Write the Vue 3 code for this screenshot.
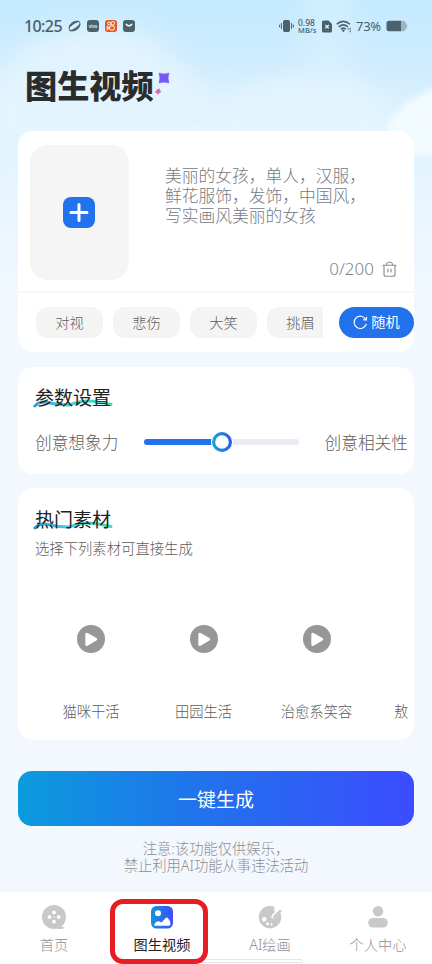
<script setup>
import { ref } from 'vue'

const moods = ['对视', '悲伤', '大笑', '挑眉']
const materials = ['猫咪干活', '田园生活', '治愈系笑容', '敖']
const strength = ref(50)
</script>

<template>
  <div class="page">
    <svg class="sky" viewBox="0 0 432 320" preserveAspectRatio="none" aria-hidden="true">
      <defs>
        <linearGradient id="skyFade" x1="0" y1="0" x2="0" y2="1">
          <stop offset="0" stop-color="#c5eafe" />
          <stop offset=".2" stop-color="#cfecfe" />
          <stop offset=".4" stop-color="#dff3fe" />
          <stop offset=".7" stop-color="#ebf6ff" />
          <stop offset="1" stop-color="#f3f8ff" />
        </linearGradient>
        <filter id="haze" x="-40%" y="-40%" width="180%" height="180%"><feGaussianBlur stdDeviation="12" /></filter>
        <filter id="edge" x="-20%" y="-20%" width="140%" height="140%"><feGaussianBlur stdDeviation="3" /></filter>
      </defs>
      <rect width="432" height="320" fill="url(#skyFade)" />
      <path d="M20 50Q90 10 150 36Q185 65 215 98Q280 70 340 70Q400 95 392 150H-10V80Z" fill="#e5f5fe" opacity=".85" filter="url(#haze)" />
      <ellipse cx="328" cy="25" rx="26" ry="60" fill="#dcf3ff" opacity=".5" filter="url(#haze)" />
      <path d="M387 134Q389 114 401 112Q404 98 418 98Q424 88 445 86V155H392Z" fill="#f5fcff" opacity=".9" filter="url(#edge)" />
    </svg>

    <header class="status">
      <div class="status-left">
        <span class="clock">10:25</span>
        <svg width="13" height="14" viewBox="0 0 13 14"><path d="M1.1 8.7C1.7 4 6 1.6 11 2.3C5.8 4 3.3 6.4 1.1 8.7ZM12 5C11.7 9.7 7.3 12.6 1.8 11.8C7.2 10.2 9.8 7.6 12 5ZM1 8.5L1.8 11.8M11 2.2L12.2 5.2" fill="#49606a" stroke="#49606a" stroke-width=".9" /></svg>
        <span class="app-badge dark"><b>vivo</b></span>
        <span class="app-badge orange">
          <svg width="12" height="12" viewBox="0 0 12 12" fill="none" stroke="#fff" stroke-width="1"><circle cx="4.2" cy="3.5" r="1.5" /><circle cx="7.8" cy="3.3" r="1.8" /><rect x="4.7" y="6" width="4.6" height="4" rx="1.2" /><path d="M2.2 6.2V9.8L4.6 8Z" /></svg>
        </span>
        <span class="app-badge dark">
          <svg width="12" height="12" viewBox="0 0 12 12" fill="none" stroke="#fff" stroke-width="1.4" stroke-linecap="round"><path d="M3.2 4.2Q6 7.4 8.8 4.2" /></svg>
        </span>
      </div>
      <div class="status-right">
        <svg class="vibrate" width="15" height="14" viewBox="0 0 15 14"><rect x="4" y="1" width="7" height="12" rx="1.8" fill="#4b626d" /><path d="M2.4 4V10M.6 5.7V8.3M12.6 4V10M14.4 5.7V8.3" stroke="#4b626d" stroke-width="1" /></svg>
        <span class="speed"><span>0.98</span><span>MB/s</span></span>
        <svg class="sim" width="10" height="13" viewBox="0 0 10 13"><path d="M2 .5H6.5L10 4V11Q10 12.5 8.5 12.5H1.5Q0 12.5 0 11V2Q0 .5 2 .5Z" fill="#4b626d" /><path d="M3.4 5L6.8 8.4M6.8 5L3.4 8.4" stroke="#e8f7ff" stroke-width="1.3" /></svg>
        <svg class="wifi" width="16" height="13" viewBox="0 0 16 13" fill="none" stroke="#4b626d" stroke-width="1.5"><path d="M.6 4.3Q7.3-1.6 14 4.3M2.7 6.9Q7.3 2.8 11.9 6.9M4.8 9.2Q7.3 7 9.8 9.2" /><path d="M5.7 10.2Q7.3 9 8.9 10.2L7.3 12.2Z" fill="#4b626d" stroke="none" /><path d="M12.2 8.2V9.7M14.2 7.8V9.4M14.2 10.6V12.2" stroke-width="1.1" /></svg>
        <span class="percent">73%</span>
        <svg width="22" height="12" viewBox="0 0 22 12"><path d="M15 .7H17Q19.5.7 19.8 3.5Q21.3 4 21.3 6T19.8 8.5Q19.5 11.3 17 11.3H15Z" fill="#9bb6c1" /><path d="M3 .7H15V11.3H3Q.5 11.3.5 8.8V3.2Q.5.7 3 .7Z" fill="#4b626d" /></svg>
      </div>
    </header>

    <div class="heading">
      <h1>图生视频</h1>
      <svg width="16" height="24" viewBox="0 0 16 24"><path d="M5 1Q10 2.8 15 1Q13.2 6 15 11Q10 9.3 5 11Q6.8 6 5 1Z" fill="#7559f5" stroke="#7559f5" stroke-width=".5" stroke-linejoin="round" /><path d="M5.3 16.8Q5 19 7.1 19.6Q4.9 20.5 4 22.4Q3.3 20.4 1.1 20Q3.2 19 3.4 17.1Q4.2 18 5.3 16.8Z" fill="#e661b5" stroke="#e661b5" stroke-width=".7" /></svg>
    </div>

    <section class="card prompt-card">
      <div class="prompt">
        <button class="upload" aria-label="+">
          <svg width="32" height="31" viewBox="0 0 32 31"><rect width="32" height="31" rx="8" fill="#2271ed" /><path d="M8 15.5H24M16 7.5V23.5" stroke="#fff" stroke-width="3" stroke-linecap="round" /></svg>
        </button>
        <div class="prompt-body">
          <p>美丽的女孩，单人，汉服，<br>鲜花服饰，发饰，中国风，<br>写实画风美丽的女孩</p>
          <div class="counter">
            <span>0/200</span>
            <svg width="15" height="17" viewBox="0 0 15 17" fill="none" stroke="#8e8e8e" stroke-width="1.15" stroke-linecap="round"><path d="M.9 4.2H14.1M4.5 4V3.2Q4.7 1.2 6.5 1.2H8.5Q10.3 1.2 10.5 3.2V4M2 4.4V13.2Q2 15.2 4 15.2H11Q13 15.2 13 13.2V4.4M6 8V11M9 8V11" /></svg>
          </div>
        </div>
      </div>
      <div class="moods">
        <div class="chips"><span v-for="mood in moods" :key="mood" class="chip">{{ mood }}</span></div>
        <button class="random">
          <svg width="15" height="15" viewBox="0 0 15 15" fill="none" stroke="#fff" stroke-width="1.15" stroke-linecap="round"><path d="M13.2 9.3A6.2 6.2 0 1 1 12.8 4.4M13.7 2.2L13.2 5L10.5 4.7" /></svg>
          <span>随机</span>
        </button>
      </div>
    </section>

    <section class="card settings">
      <h2><svg class="wave" width="80" height="9" viewBox="0 0 80 9"><defs><linearGradient id="wave" x1="0" x2="1"><stop stop-color="#329fdb" /><stop offset=".45" stop-color="#42cfdf" /><stop offset="1" stop-color="#3be0b0" /></linearGradient></defs><path d="M1.8 7Q7 1.5 16 3.7T36 6Q50 1 60 2.3T78 5.5" fill="none" stroke="url(#wave)" stroke-width="3" stroke-linecap="round" /></svg><span>参数设置</span></h2>
      <div class="slider-row">
        <span>创意想象力</span>
        <div class="slider">
          <div class="fill" :style="{ width: strength + '%' }"></div>
          <svg class="thumb" width="22" height="22" viewBox="0 0 22 22"><defs><linearGradient id="ring"><stop stop-color="#15a2d6" /><stop offset="1" stop-color="#2d5fe5" /></linearGradient></defs><circle cx="11" cy="11" r="11" fill="#fff" /><circle cx="11" cy="11" r="8.4" fill="#fff" stroke="url(#ring)" stroke-width="3.2" /></svg>
        </div>
        <span>创意相关性</span>
      </div>
    </section>

    <section class="card hot">
      <h2><svg class="wave" width="80" height="9" viewBox="0 0 80 9"><path d="M1.8 7Q7 1.5 16 3.7T36 6Q50 1 60 2.3T78 5.5" fill="none" stroke="url(#wave)" stroke-width="3" stroke-linecap="round" /></svg><span>热门素材</span></h2>
      <p class="subtitle">选择下列素材可直接生成</p>
      <div class="materials">
        <div v-for="name in materials" :key="name" class="material">
          <svg width="28" height="28" viewBox="0 0 28 28"><circle cx="14" cy="14" r="14" fill="#979797" /><path d="M9.8 9.2V19.4L18.7 14.3Z" fill="#fff" stroke="#fff" stroke-width="3" stroke-linejoin="round" /></svg>
          <span>{{ name }}</span>
        </div>
      </div>
    </section>

    <button class="generate">一键生成</button>
    <p class="notice">注意:该功能仅供娱乐，<br>禁止利用AI功能从事违法活动</p>

    <nav>
      <a class="tab">
        <svg width="26" height="26" viewBox="0 0 26 26"><circle cx="13" cy="13" r="12" fill="#c8c8c8" /><path d="M18 22Q22 22.5 24 23.7Q20 26 16 24.5Z" fill="#c8c8c8" /><g fill="#fff"><circle cx="13" cy="8.4" r="1.9" /><circle cx="8.4" cy="13" r="1.9" /><circle cx="17.6" cy="13" r="1.9" /><circle cx="13" cy="17.6" r="1.9" /><circle cx="13" cy="13" r=".7" /></g></svg>
        <span>首页</span>
      </a>
      <a class="tab active">
        <svg width="26" height="26" viewBox="0 0 26 26"><defs><linearGradient id="pic"><stop stop-color="#1296df" /><stop offset="1" stop-color="#3c4cfb" /></linearGradient></defs><rect x="2" y="2" width="22" height="22.5" rx="5.5" fill="url(#pic)" /><circle cx="9" cy="9.2" r="3" fill="#fff" /><path d="M5.2 20.5Q7 17.2 9.2 17.3Q11.5 17.5 12.6 18.6L16 14.7Q17.7 12.7 19 14.3Q21 16 21.5 20Q21.6 21.7 20 21.7H6.2Q4.8 21.7 5.2 20.5Z" fill="#fff" /></svg>
        <span>图生视频</span>
      </a>
      <a class="tab">
        <svg width="26" height="26" viewBox="0 0 26 26"><path d="M13 2A11.2 11.2 0 1 0 24.2 13.2Q24.2 11 23.2 8.8L17.5 14.2L14.2 14.6L14.7 11.2L18.2 7.6L16.8 5.8L17.6 2.9Q15.5 2 13 2Z" fill="#c8c8c8" /><path d="M23.4 7L17 12.9" stroke="#c8c8c8" stroke-width="2.4" stroke-linecap="round" /><g fill="#fff"><circle cx="7.3" cy="15.2" r="2.2" /><circle cx="10.6" cy="19.7" r="1.5" /><circle cx="14.5" cy="20.4" r="1.1" /></g></svg>
        <span>AI绘画</span>
      </a>
      <a class="tab">
        <svg width="26" height="26" viewBox="0 0 26 26" fill="#c8c8c8"><circle cx="13" cy="7.3" r="5.2" /><rect x="3.3" y="14" width="19.4" height="9.5" rx="4.6" /></svg>
        <span>个人中心</span>
      </a>
      <i class="home-bar"></i>
      <i class="marker"></i>
    </nav>
  </div>
</template>

<style>
body { margin: 0; }
</style>

<style scoped>
.page {
  position: relative;
  box-sizing: border-box;
  width: 432px;
  height: 964px;
  padding: 0 18px;
  overflow: hidden;
  display: flex;
  flex-direction: column;
  background: #f3f8ff;
  color: #5c5c5c;
  font-family: "Noto Sans", "Noto Sans CJK SC", sans-serif;
  font-weight: 300;
}
.page * { box-sizing: border-box; }
svg { display: block; flex: none; }
button { border: 0; padding: 0; font: inherit; }
h1, h2, p { margin: 0; }
.sky { position: absolute; left: 0; top: 0; width: 432px; height: 320px; }
.status {
  position: relative;
  height: 52px;
  flex: none;
  display: flex;
  justify-content: space-between;
  padding: 0 6px 0 6px;
  color: #485e68;
  font-weight: 500;
}
.status-left, .status-right { display: flex; align-items: center; height: 52px; }
.status-left { gap: 6px; }
.clock { font-size: 16px; width: 38px; letter-spacing: -.6px; }
.app-badge { width: 12px; height: 12px; border-radius: 3px; display: flex; align-items: center; justify-content: center; overflow: hidden; }
.dark { background: #4b626d; }
.orange { background: #ea541d; }
.app-badge b { color: #fff; font-size: 4.5px; line-height: 6px; font-weight: 500; }
.vibrate { margin-right: 4px; }
.speed { display: flex; flex-direction: column; gap: 1px; font-size: 7.5px; line-height: 7px; width: 21px; margin-right: 3px; font-weight: 500; }
.speed span:first-child { font-size: 8.5px; }
.sim { margin-right: 4px; }
.wifi { margin-right: 4px; }
.percent { font-size: 13px; width: 26px; margin-right: 4px; letter-spacing: -.3px; font-weight: 400; }
.heading { position: relative; height: 79px; flex: none; display: flex; padding: 12px 0 0 7px; }
h1 { width: 129px; font-size: 32.2px; line-height: 44px; font-weight: 900; color: #292c2d; white-space: nowrap; }
.heading svg { margin-top: 8px; }
.card { position: relative; flex: none; background: #fff; border-radius: 15px; }
.prompt-card { height: 221px; }
.prompt { height: 162px; padding: 14px 24px 0 12px; display: flex; border-bottom: 2px solid #f7f7f7; }
.upload { width: 99px; height: 135px; border-radius: 18px; background: #f5f5f5; display: grid; place-items: center; }
.upload svg { margin-right: 1px; }
.prompt-body { flex: 1; padding: 21px 0 0 36px; display: flex; flex-direction: column; }
.prompt-body p { color: #747983; font-size: 16.75px; line-height: 19.8px; white-space: nowrap; }
.counter { display: flex; align-items: center; justify-content: flex-end; gap: 8px; margin: 33px -7px 0 0; color: #858585; font-size: 17px; line-height: 22px; }
.moods { display: flex; justify-content: space-between; padding: 14px 0 0 18px; }
.chips { width: 287px; display: flex; gap: 10px; overflow: hidden; }
.chip { flex: none; width: 67px; height: 31px; border-radius: 12px; background: #f4f4f4; text-align: center; font-size: 14.2px; line-height: 31px; }
.random { width: 75px; height: 31px; border-radius: 16px; background: #2271ed; color: #fff; display: flex; align-items: center; justify-content: center; gap: 3px; font-size: 14.2px; font-weight: 400; white-space: nowrap; }
.random span { line-height: 20px; padding-bottom: 1px; }
.settings { height: 107px; margin-top: 15px; padding: 18px 6px 0 17px; }
h2 { position: relative; width: 80px; font-size: 19px; font-weight: 400; color: #222; line-height: 27px; height: 27px; white-space: nowrap; }
h2 span { position: relative; }
.wave { position: absolute; left: -2px; top: 14px; }
.slider-row { display: flex; align-items: center; justify-content: space-between; margin-top: 17px; height: 25px; font-size: 16.7px; white-space: nowrap; }
.slider { width: 155px; height: 6px; border-radius: 3px; background: #e9ebf5; position: relative; }
.fill { height: 6px; border-radius: 3px; background: #2271ed; }
.thumb { position: absolute; left: 50%; top: 50%; transform: translate(-50%, -50%); }
.hot { height: 252px; margin-top: 14px; padding: 19px 6px 0 17px; }
.subtitle { margin-top: 4px; font-size: 14.35px; line-height: 22px; white-space: nowrap; }
.materials { display: flex; overflow: hidden; margin-top: 65px; }
.material { flex: none; width: 113px; display: flex; flex-direction: column; align-items: center; gap: 48px; font-size: 14.3px; line-height: 21px; }
.material:first-child { width: 112px; }
.material:last-child { align-items: flex-start; padding-left: 21px; }
.material:last-child svg { visibility: hidden; }
.generate { position: relative; flex: none; height: 55px; margin-top: 31px; border-radius: 14px; background: linear-gradient(90deg, #0b9bdd, #2271ed 48%, #3c4cff); color: #fff; font-size: 19px; font-weight: 400; }
.notice { margin-top: 14px; height: 52px; text-align: center; color: #8f8f8f; font-size: 14.3px; line-height: 17.3px; }
nav { position: relative; flex: none; height: 72px; margin: 0 -18px; background: #fff; display: grid; grid-template-columns: repeat(4, 1fr); }
.tab { display: flex; flex-direction: column; align-items: center; padding-top: 12px; gap: 4px; color: #8f8f8f; font-size: 14.2px; line-height: 21px; white-space: nowrap; }
.active { color: #222; font-weight: 400; }
.home-bar { position: absolute; left: 129px; bottom: 1px; width: 174px; height: 4px; border: 1px solid #e6e6e6; border-radius: 2px; background: #fff; }
.marker { position: absolute; left: 110px; top: 7px; width: 98px; height: 65px; border: 5px solid #e81c24; border-radius: 13px; }
</style>
